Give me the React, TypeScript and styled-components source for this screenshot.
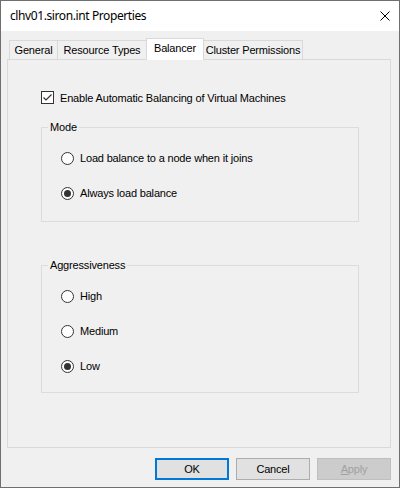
import React from "react";
import styled, { createGlobalStyle } from "styled-components";

const GlobalStyle = createGlobalStyle`
  html, body {
    margin: 0;
    padding: 0;
    background: #ffffff;
  }
  * {
    box-sizing: border-box;
  }
`;

const Window = styled.div`
  width: 400px;
  height: 488px;
  border: 1px solid #6f6f6f;
  display: flex;
  flex-direction: column;
  font-family: "Liberation Sans", Arial, sans-serif;
  font-size: 11px;
  letter-spacing: -0.17px;
  color: #000;
`;

const TitleBar = styled.div`
  height: 30px;
  background: #ffffff;
  display: flex;
  align-items: center;
  justify-content: space-between;
  padding: 0 9px 1px 9px;
`;

const Title = styled.span`
  font-family: "Noto Sans", "Open Sans", sans-serif;
  font-size: 12px;
  letter-spacing: -0.4px;
  color: #000;
`;

const CloseButton = styled.svg`
  width: 10px;
  height: 10px;
`;

const Body = styled.div`
  flex: 1;
  background: #f0f0f0;
  padding: 7px 8px 7px 6px;
  display: flex;
  flex-direction: column;
`;

const TabStrip = styled.div`
  height: 22px;
  margin-bottom: -1px;
  padding-left: 2px;
  display: flex;
  align-items: flex-start;
  position: relative;
  z-index: 1;
`;

const Tab = styled.div<{ $active?: boolean; $w: number }>`
  width: ${({ $w }) => $w}px;
  height: ${({ $active }) => ($active ? 22 : 19)}px;
  margin-top: ${({ $active }) => ($active ? 0 : 2)}px;
  margin-left: -1px;
  border: 1px solid #d9d9d9;
  border-bottom: none;
  background: ${({ $active }) => ($active ? "#ffffff" : "#f0f0f0")};
  text-align: center;
  line-height: 13px;
  padding-top: 3px;
  white-space: nowrap;
  position: relative;
  z-index: ${({ $active }) => ($active ? 2 : 1)};

  &:first-child {
    margin-left: 0;
  }
`;

const Panel = styled.div`
  height: 389px;
  border: 1px solid #d9d9d9;
  background: #f0f0f0;
  padding: 31px 31px 0 33px;
  display: flex;
  flex-direction: column;
`;

const CheckRow = styled.label`
  display: flex;
  align-items: center;
  height: 13px;
  gap: 6px;
`;

const CheckBox = styled.span`
  width: 13px;
  height: 13px;
  border: 1px solid #333333;
  background: #ffffff;
  display: flex;
`;

const Group = styled.fieldset<{ $bottom: number }>`
  margin: 17px 0 0 0;
  border: 1px solid #dcdcdc;
  padding: 17px 0 ${({ $bottom }) => $bottom}px 6px;
  display: flex;
  flex-direction: column;
  gap: 21px;
  min-width: 0;

  & + & {
    margin-top: 37px;
  }
`;

const Legend = styled.legend`
  margin: 0;
  padding: 0 2px;
  line-height: 13px;
`;

const RadioRow = styled.label`
  display: flex;
  align-items: center;
  height: 14px;
  gap: 6px;
  padding-left: 13px;
`;

const RadioCircle = styled.span<{ $checked?: boolean }>`
  width: 13px;
  height: 13px;
  border-radius: 50%;
  border: 1px solid #333333;
  background: #ffffff;
  display: flex;
  align-items: center;
  justify-content: center;

  &::after {
    content: "";
    display: ${({ $checked }) => ($checked ? "block" : "none")};
    width: 7px;
    height: 7px;
    border-radius: 50%;
    background: #333333;
  }
`;

const ButtonRow = styled.div`
  margin-top: 10px;
  display: flex;
  justify-content: flex-end;
  gap: 7px;
`;

const Button = styled.div<{ $variant?: "default" | "disabled" }>`
  width: 74px;
  height: 22px;
  display: flex;
  align-items: center;
  justify-content: center;
  background: ${({ $variant }) => ($variant === "disabled" ? "#cccccc" : "#e1e1e1")};
  border: ${({ $variant }) =>
    $variant === "default"
      ? "2px solid #0078d7"
      : $variant === "disabled"
      ? "1px solid #bfbfbf"
      : "1px solid #adadad"};
  color: ${({ $variant }) => ($variant === "disabled" ? "#a0a0a0" : "#000")};
`;

const Radio = ({ label, checked }: { label: string; checked?: boolean }) => (
  <RadioRow>
    <RadioCircle $checked={checked} />
    <span>{label}</span>
  </RadioRow>
);

export default function App() {
  return (
    <>
      <GlobalStyle />
      <Window>
        <TitleBar>
          <Title>clhv01.siron.int Properties</Title>
          <CloseButton viewBox="0 0 10 10">
            <path d="M0.5 0.5 L9.5 9.5 M9.5 0.5 L0.5 9.5" stroke="#000" strokeWidth="1" />
          </CloseButton>
        </TitleBar>
        <Body>
          <TabStrip>
            <Tab $w={49}>General</Tab>
            <Tab $w={90}>Resource Types</Tab>
            <Tab $w={58} $active>Balancer</Tab>
            <Tab $w={100}>Cluster Permissions</Tab>
          </TabStrip>
          <Panel>
            <CheckRow>
              <CheckBox>
                <svg width="11" height="11" viewBox="0 0 11 11">
                  <path d="M1.5 5.5 L4 8 L9.5 2.5" stroke="#333" strokeWidth="1.2" fill="none" />
                </svg>
              </CheckBox>
              <span>Enable Automatic Balancing of Virtual Machines</span>
            </CheckRow>
            <Group $bottom={21}>
              <Legend>Mode</Legend>
              <Radio label="Load balance to a node when it joins" />
              <Radio label="Always load balance" checked />
            </Group>
            <Group $bottom={19}>
              <Legend>Aggressiveness</Legend>
              <Radio label="High" />
              <Radio label="Medium" />
              <Radio label="Low" checked />
            </Group>
          </Panel>
          <ButtonRow>
            <Button $variant="default">OK</Button>
            <Button>Cancel</Button>
            <Button $variant="disabled">
              <span>
                <u>A</u>pply
              </span>
            </Button>
          </ButtonRow>
        </Body>
      </Window>
    </>
  );
}
